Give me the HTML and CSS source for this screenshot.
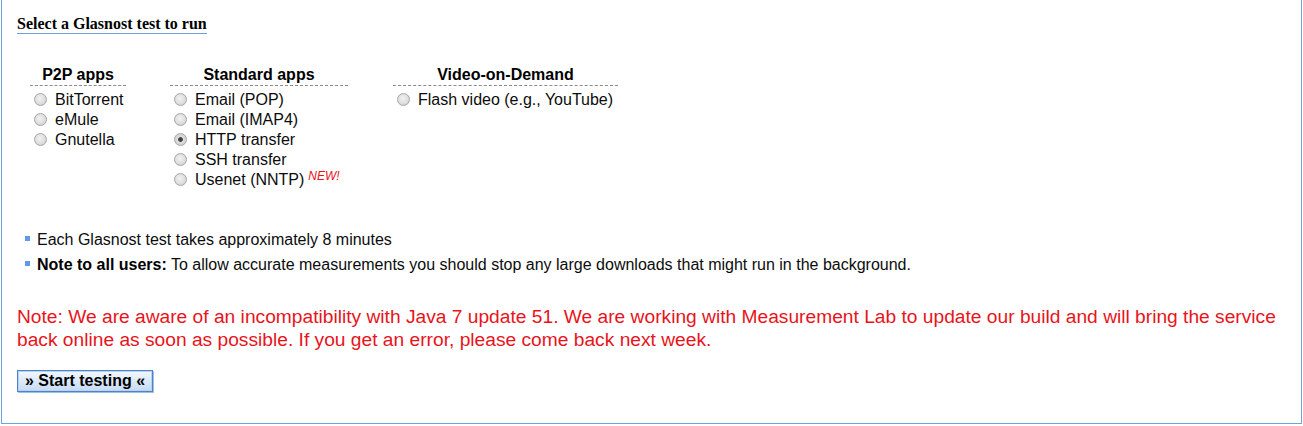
FILE: index.html
```html
<!DOCTYPE html>
<html>
<head>
<meta charset="utf-8">
<link rel="stylesheet" href="styles.css">
</head>
<body>
<div class="panel">
  <h2 class="title">Select a Glasnost test to run</h2>
  <div class="groups">
    <div class="group g-p2p">
      <div class="group-head">P2P apps</div>
      <label class="opt"><input type="radio" name="t"> BitTorrent</label>
      <label class="opt"><input type="radio" name="t"> eMule</label>
      <label class="opt"><input type="radio" name="t"> Gnutella</label>
    </div>
    <div class="group g-std">
      <div class="group-head">Standard apps</div>
      <label class="opt"><input type="radio" name="t"> Email (POP)</label>
      <label class="opt"><input type="radio" name="t"> Email (IMAP4)</label>
      <label class="opt"><input type="radio" name="t" checked> HTTP transfer</label>
      <label class="opt"><input type="radio" name="t"> SSH transfer</label>
      <label class="opt"><input type="radio" name="t"> Usenet (NNTP) <sup class="new">NEW!</sup></label>
    </div>
    <div class="group g-vod">
      <div class="group-head">Video-on-Demand</div>
      <label class="opt"><input type="radio" name="t"> Flash video (e.g., YouTube)</label>
    </div>
  </div>
  <ul class="notes">
    <li>Each Glasnost test takes approximately 8 minutes</li>
    <li><b>Note to all users:</b> To allow accurate measurements you should stop any large downloads that might run in the background.</li>
  </ul>
  <p class="warning">Note: We are aware of an incompatibility with Java 7 update 51. We are working with Measurement Lab to update our build and will bring the service back online as soon as possible. If you get an error, please come back next week.</p>
  <button class="start">» Start testing «</button>
</div>
</body>
</html>
```
FILE: styles.css
```css
html, body {
  margin: 0;
  padding: 0;
  background: #fff;
}
body {
  font-family: "Liberation Sans", Arial, sans-serif;
  font-size: 16px;
  color: #0c0c0c;
}
.panel {
  margin: 0 1px;
  border: 1px solid #6fa3dc;
  border-top: none;
  padding: 0 15px 31px 15px;
}
.title {
  display: inline-block;
  margin: 15px 0 0 0;
  font-family: "Liberation Serif", "Times New Roman", serif;
  font-size: 16px;
  font-weight: bold;
  line-height: 18px;
  border-bottom: 1px solid #6f9fd4;
  color: #000;
}
.groups {
  display: flex;
  margin: 31px 0 0 13px;
}
.group {
  display: flex;
  flex-direction: column;
}
.g-p2p { width: 96px; }
.g-std { width: 178px; margin-left: 44px; }
.g-vod { width: 225px; margin-left: 45px; }
.group-head {
  font-weight: bold;
  text-align: center;
  line-height: 20px;
  border-bottom: 1px dashed #8a8a8a;
  margin-bottom: 4px;
  color: #000;
}
.opt {
  display: flex;
  align-items: center;
  line-height: 20px;
  height: 20px;
  white-space: nowrap;
}
.opt input {
  appearance: none;
  -webkit-appearance: none;
  width: 13px;
  height: 13px;
  margin: 0 8px 2px 4px;
  border-radius: 50%;
  border: 1px solid #a6a6a6;
  background: radial-gradient(circle at 45% 40%, #f2f2f2 0%, #dedede 55%, #c8c8c8 100%);
  box-sizing: border-box;
  flex: none;
}
.opt input:checked {
  background: radial-gradient(circle at 50% 50%, #3a3a3a 0, #4a4a4a 2px, #dedede 2.8px, #c8c8c8 100%);
}
.new {
  color: #e8141c;
  font-style: italic;
  font-size: 12px;
  line-height: 0;
  margin-left: 4px;
  position: relative;
  top: -4px;
  vertical-align: baseline;
}
.notes {
  list-style: none;
  margin: 40px 0 0 0;
  padding: 0;
}
.notes li {
  line-height: 20px;
  margin-bottom: 5px;
}
.notes li:last-child { margin-bottom: 0; }
.notes li::before {
  content: "";
  display: inline-block;
  width: 5px;
  height: 5px;
  background: #5f9ae6;
  margin: 0 7px 0 8px;
  vertical-align: 4px;
}
.notes b { color: #000; }
.warning {
  margin: 30px 0 0 0;
  color: #e8141c;
  font-size: 19.2px;
  line-height: 23px;
}
.start {
  display: block;
  margin-top: 19px;
  height: 22px;
  padding: 0 7px;
  font-family: "Liberation Sans", Arial, sans-serif;
  font-size: 16px;
  font-weight: bold;
  color: #000;
  border: 1px solid #4f83c6;
  box-shadow: inset 0 0 0 1px #b8d2f0, 1px 1px 0 #9fbfe6;
  background: linear-gradient(#f3f8fe, #c5dbf4);
  border-radius: 0;
  line-height: 18px;
}
```
